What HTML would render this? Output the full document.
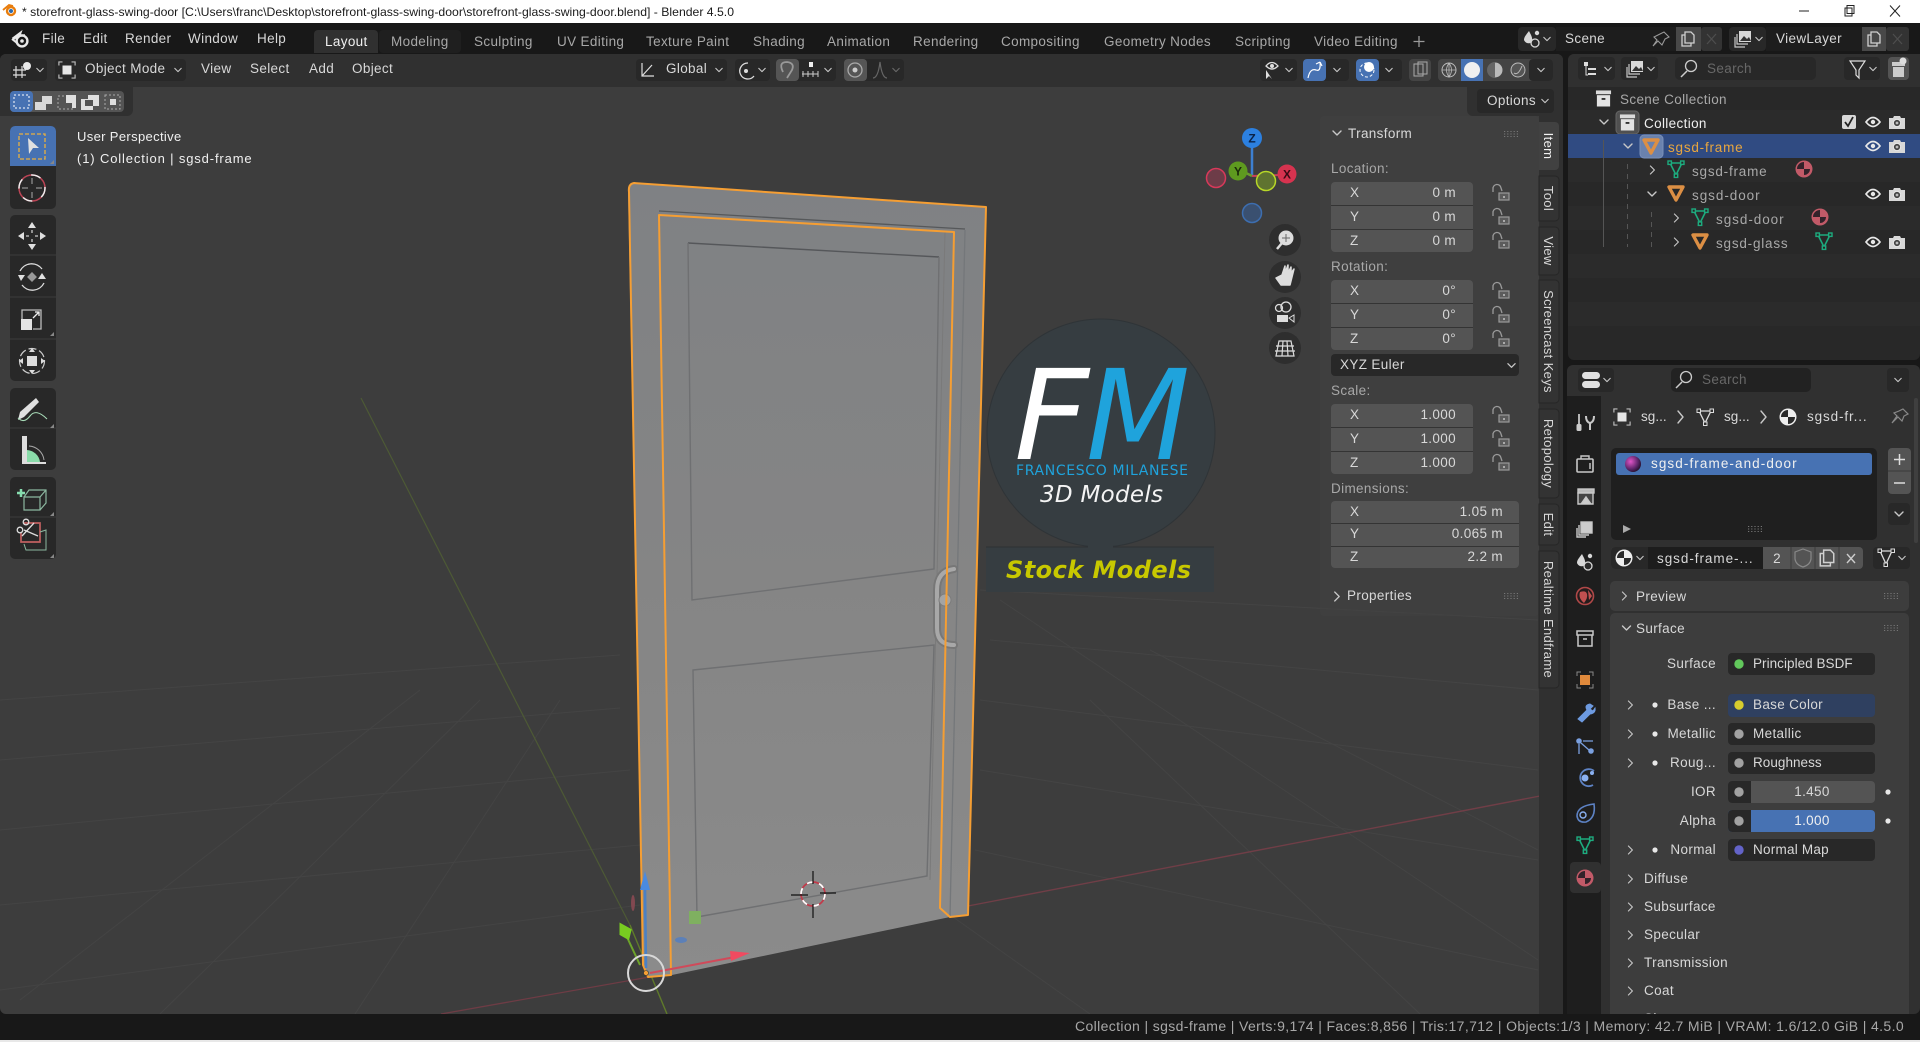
<!DOCTYPE html>
<html><head><meta charset="utf-8"><title>Blender</title>
<style>
html,body{margin:0;padding:0;background:#303030;width:1920px;height:1042px;overflow:hidden}
svg{display:block;position:absolute;left:0;top:0}
text{font-family:"Liberation Sans",sans-serif;font-size:13.5px;fill:#c8c8c8;letter-spacing:.35px;white-space:pre}
.m{fill:#d8d8d8}.t{fill:#a8a8a8}.w{fill:#f0f0f0}.r{text-anchor:end}.c{text-anchor:middle}
.ic{fill:none;stroke:#d4d4d4;stroke-width:1.5;stroke-linecap:round;stroke-linejoin:round}
.chev{fill:none;stroke:#c8c8c8;stroke-width:1.4;stroke-linecap:round;stroke-linejoin:round}
.logo{font-family:"DejaVu Sans",sans-serif;letter-spacing:0}
</style></head><body>
<svg width="1920" height="1042" viewBox="0 0 1920 1042" xmlns="http://www.w3.org/2000/svg">
<defs>
<symbol id="dn" viewBox="0 0 10 10" overflow="visible"><path d="M1 3 L5 7 L9 3" class="chev"/></symbol>
<symbol id="rt" viewBox="0 0 10 10" overflow="visible"><path d="M3 0 L8 5 L3 10" class="chev"/></symbol>
<symbol id="lock" viewBox="0 0 18 16" overflow="visible"><path d="M1 7 V4 a4 4 0 0 1 8 -1 l1 3" fill="none" stroke="#9a9a9a" stroke-width="1.3"/><rect x="7" y="8" width="10" height="7" fill="#5c5c5c" stroke="#9a9a9a" stroke-width="1.2"/><rect x="11" y="11" width="2" height="2" fill="#aaa"/></symbol>
<symbol id="tri" viewBox="0 0 18 18" overflow="visible"><path d="M2 3 H16 L9 16 Z" fill="none" stroke="#dc8f44" stroke-width="3.4" stroke-linejoin="round"/></symbol>
<symbol id="mesh" viewBox="0 0 18 18" overflow="visible"><path d="M3 3 H15 L9 15 Z" fill="none" stroke="#1dab7e" stroke-width="1.6"/><g fill="#282828" stroke="#1dab7e" stroke-width="1.4"><rect x="1" y="1" width="3.4" height="3.4"/><rect x="13.6" y="1" width="3.4" height="3.4"/><rect x="7.3" y="14" width="3.4" height="3.4"/></g></symbol>
<symbol id="matl" viewBox="0 0 18 18" overflow="visible"><circle cx="9" cy="9" r="8.5" fill="#c25a68"/><path d="M9 9 H2 A7 7 0 0 1 9 2 Z M9 9 H15 A6 6 0 0 1 9 15 Z" fill="#33222a"/></symbol>
<symbol id="mat" viewBox="0 0 18 18" overflow="visible"><circle cx="9" cy="9" r="8.5" fill="#eee"/><path d="M9 9 H16 A7 7 0 0 1 9 16 Z M9 9 H2 A7 7 0 0 1 9 2 Z" fill="#2a2a2a"/></symbol>
<symbol id="eye" viewBox="0 0 16 12" overflow="visible"><path d="M1 6 Q8 -3 15 6 Q8 15 1 6 Z" fill="none" stroke="#e8e8e8" stroke-width="1.7"/><circle cx="8" cy="6" r="2.2" fill="#e8e8e8"/></symbol>
<symbol id="cam" viewBox="0 0 16 14" overflow="visible"><path d="M0 3 H4 L5 1 H11 L12 3 H16 V14 H0 Z" fill="#d8d8d8"/><circle cx="8" cy="8" r="3.6" fill="#444" stroke="#e8e8e8"/><circle cx="8" cy="8" r="1.4" fill="#bbb"/></symbol>
<symbol id="coll" viewBox="0 0 18 18" overflow="visible"><rect x="1" y="1" width="16" height="4" fill="#dadada"/><rect x="2" y="6" width="14" height="12" fill="#e2e2e2"/><rect x="7" y="9" width="4" height="2" fill="#333"/></symbol>
<symbol id="grip" viewBox="0 0 14 6" overflow="visible"><path d="M0 .5 h14 M0 3 h14 M0 5.5 h14" stroke="#777" stroke-width="1" stroke-dasharray="1.2 2"/></symbol>
<symbol id="copy" viewBox="0 0 14 16" overflow="visible"><path d="M4 1 H10 L13 4 V12 H4 Z" fill="none" stroke="#d0d0d0" stroke-width="1.3"/><path d="M4 4 H1 V15 H10 V12" fill="none" stroke="#d0d0d0" stroke-width="1.3"/></symbol>
<symbol id="scene" viewBox="0 0 18 18" overflow="visible"><path d="M6 1 C3 5 1 7 1 10 A5 5 0 0 0 9 12 C10 8 8 5 6 1 Z" fill="#d8d8d8"/><circle cx="12" cy="13" r="4" fill="#2a2a2a" stroke="#d8d8d8" stroke-width="1.3"/><circle cx="14" cy="3" r="2.2" fill="#d8d8d8"/></symbol>
<symbol id="vl" viewBox="0 0 18 18" overflow="visible"><rect x="5" y="1" width="12" height="11" fill="#d8d8d8"/><path d="M6 11 L10 6 L13 9 L15 7 L17 11 Z" fill="#333"/><path d="M3 4 V14 H14 M1 7 V17 H11" fill="none" stroke="#c8c8c8" stroke-width="1.2"/></symbol>
<symbol id="objicon" viewBox="0 0 20 20" overflow="visible"><path d="M1 5 V1 H5 M15 1 H19 V5 M19 15 V19 H15 M5 19 H1 V15" fill="none" stroke="#bbb" stroke-width="1.3"/><rect x="5" y="5" width="10" height="10" fill="#e6e6e6"/></symbol>
<linearGradient id="doorG" x1="0" y1="0" x2="0" y2="1"><stop offset="0" stop-color="#7f8184"/><stop offset=".5" stop-color="#858585"/><stop offset="1" stop-color="#8b8b8b"/></linearGradient>
<radialGradient id="sph" cx=".35" cy=".35" r=".8"><stop offset="0" stop-color="#e055c8"/><stop offset=".6" stop-color="#5a2468"/><stop offset="1" stop-color="#0c0810"/></radialGradient>
<clipPath id="vp"><rect x="0" y="87" width="1563" height="927"/></clipPath>
<clipPath id="props"><rect x="1601" y="396" width="319" height="618"/></clipPath>
</defs>

<!-- window background -->
<rect width="1920" height="1042" fill="#181818"/>
<!-- title bar -->
<rect width="1920" height="23" fill="#ffffff"/>
<circle cx="11" cy="11" r="4" fill="#fff" stroke="#e87d0d" stroke-width="2.4"/><circle cx="11" cy="11" r="2" fill="#2a6ab0"/><path d="M3 10 L9 5 L13 6" stroke="#e87d0d" stroke-width="1.8" fill="none"/>
<text x="22" y="16" style="font-size:12px;fill:#1a1a1a;letter-spacing:0" textLength="712" lengthAdjust="spacingAndGlyphs">* storefront-glass-swing-door [C:\Users\franc\Desktop\storefront-glass-swing-door\storefront-glass-swing-door.blend] - Blender 4.5.0</text>
<path d="M1799 11 H1809" stroke="#222" stroke-width="1"/>
<rect x="1845" y="8" width="7" height="8" fill="#fff" stroke="#222"/><rect x="1847" y="5.5" width="7" height="8" fill="none" stroke="#222"/>
<path d="M1890 5.5 L1900 16.5 M1900 5.5 L1890 16.5" stroke="#222" stroke-width="1"/>

<!-- top bar -->
<rect y="23" width="1920" height="31" fill="#181818"/>
<g transform="translate(11,31)"><path d="M2 7 L10 1 L9 4 L3 8 Z M6 4 H14" stroke="#e8e8e8" stroke-width="1.6" fill="#e8e8e8"/><circle cx="11" cy="10" r="5.4" fill="none" stroke="#e8e8e8" stroke-width="2.4"/><circle cx="11" cy="10" r="1.8" fill="#e8e8e8"/><path d="M1 8 L6 12" stroke="#e8e8e8" stroke-width="2"/></g>
<text x="42" y="43" class="m">File</text><text x="83" y="43" class="m">Edit</text><text x="125" y="43" class="m">Render</text><text x="188" y="43" class="m">Window</text><text x="257" y="43" class="m">Help</text>
<path d="M314 53 V34 a4 4 0 0 1 4 -4 H374 a4 4 0 0 1 4 4 V53 Z" fill="#303030"/>
<rect x="379" y="30" width="82" height="23" rx="4" fill="#1f1f1f"/>
<text x="325" y="46" class="w">Layout</text>
<g class="t"><text x="391" y="46" class="t">Modeling</text><text x="474" y="46" class="t">Sculpting</text><text x="557" y="46" class="t">UV Editing</text><text x="646" y="46" class="t">Texture Paint</text><text x="753" y="46" class="t">Shading</text><text x="827" y="46" class="t">Animation</text><text x="913" y="46" class="t">Rendering</text><text x="1001" y="46" class="t">Compositing</text><text x="1104" y="46" class="t">Geometry Nodes</text><text x="1235" y="46" class="t">Scripting</text><text x="1314" y="46" class="t">Video Editing</text></g>
<path d="M1419 36 V47 M1413.500 41.500 H1424.500" stroke="#999" stroke-width="1.3"/>

<!-- scene / view layer -->
<rect x="1518" y="27" width="38" height="24" rx="4" fill="#282828"/><use href="#scene" x="1523" y="30" width="18" height="18"/><use href="#dn" x="1543" y="35" width="8" height="8"/>
<rect x="1556" y="27" width="120" height="24" fill="#1d1d1d"/><text x="1565" y="43" class="m">Scene</text>
<path d="M1664 32 l5 5 -4 2 -3 6 -4 -4 -5 5 4 -6 -3 -3 6 -3 Z" fill="none" stroke="#999" stroke-width="1.1"/>
<rect x="1676" y="27" width="25" height="24" fill="#484848"/><use href="#copy" x="1681" y="31" width="14" height="16"/>
<rect x="1701" y="27" width="21" height="24" rx="3" fill="#333"/><path d="M1707 34 l9 10 M1716 34 l-9 10" stroke="#4e4e4e" stroke-width="1.2"/>
<rect x="1729" y="27" width="37" height="24" rx="4" fill="#282828"/><use href="#vl" x="1734" y="30" width="18" height="18"/><use href="#dn" x="1755" y="35" width="8" height="8"/>
<rect x="1766" y="27" width="96" height="24" fill="#1d1d1d"/><text x="1776" y="43" class="m">ViewLayer</text>
<rect x="1862" y="27" width="24" height="24" fill="#484848"/><use href="#copy" x="1867" y="31" width="14" height="16"/>
<rect x="1886" y="27" width="23" height="24" rx="3" fill="#333"/><path d="M1893 34 l9 10 M1902 34 l-9 10" stroke="#4e4e4e" stroke-width="1.2"/>

<!-- VIEWPORT -->
<rect x="0" y="54" width="1563" height="960" rx="6" fill="#3d3d3d"/>
<g clip-path="url(#vp)">
<g stroke="#444" stroke-width="1" fill="none">
<path d="M0 700 L620 655 M0 760 L620 708 M0 830 L630 770 M0 905 L640 845 M0 990 L640 905"/>
<path d="M990 640 L1538 690 M980 700 L1538 770 M980 770 L1538 860 M975 850 L1538 970 M980 590 L1538 620"/>
<path d="M953 917 L1090 1014 M1000 600 L1538 960 M1150 650 L1538 850 M1090 700 L1420 1014"/>
<path d="M355 1014 L560 700 M160 1014 L480 700 M20 1000 L420 690"/>
</g>
<path d="M441 1014 L672 973" stroke="#6e3c45" stroke-width="1.3"/><path d="M968 906 L1540 796" stroke="#703e47" stroke-width="1.4"/>
<path d="M361 398 L630 925" stroke="#4d5a35" stroke-width="1.2"/><path d="M630 925 L667 1014" stroke="#5f7a2a" stroke-width="1.4"/>

<!-- door body -->
<path d="M628 190 Q628 183 634 183 L986 207 L968 915 L950 917 L672 975 L648 977 L643 965 Z" fill="url(#doorG)"/>
<path d="M965 230 L950 917" stroke="#74777a" stroke-width="1.3" fill="none"/>
<path d="M659 211 L965 229" stroke="#56585a" stroke-width="1.3" fill="none"/>
<path d="M688 243 L939 257" stroke="#55575a" stroke-width="1.4" fill="none"/>
<path d="M688 243 L692 600 L934 569 L939 257" stroke="#6f7072" stroke-width="1.4" fill="none"/>
<path d="M693 670 L934 645 L927 876 L697 917 Z" stroke="#6f7072" stroke-width="1.4" fill="none"/>
<path d="M945 232 L930 880" stroke="#7a7a7a" stroke-width="1" fill="none"/>
<!-- handle -->
<path d="M954 569 Q937 571 937 590 V628 Q937 645 954 645" stroke="#777" stroke-width="8" fill="none" stroke-linecap="round"/>
<path d="M954 569 Q937 571 937 590 V628 Q937 645 954 645" stroke="#a8a8a8" stroke-width="4" fill="none" stroke-linecap="round"/>
<circle cx="945" cy="600" r="6" fill="#a4a4a4" stroke="#7c7c7c"/>
<!-- outlines -->
<g fill="none" stroke="#f59e33" stroke-width="2" stroke-linejoin="round">
<path d="M634 183 L986 207 L968 915 L950 917 L940 908 L954 232 L659 215 L671 975 L648 977 L643 965 L629 192 Q628 184 634 183 Z"/>
</g>
<!-- move gizmo -->
<path d="M646 968 L645 885" stroke="#4a80c4" stroke-width="2.5"/><path d="M645 871 L640 890 H650 Z" fill="#4a8ae0"/>
<path d="M626 935 L640 965" stroke="#6da32a" stroke-width="2"/><path d="M621 925 L630 930 L628 938 L621 934 Z" fill="#78cc20" stroke="#78cc20" stroke-width="3"/>
<path d="M650 973 L735 957" stroke="#d04a5a" stroke-width="2"/><path d="M730 951 L750 953 L731 961 Z" fill="#f04a60"/>
<rect x="689" y="911" width="12" height="13" fill="#7fb060"/>
<ellipse cx="681" cy="940" rx="6" ry="3" fill="#5c80b8"/>
<ellipse cx="633" cy="903" rx="2" ry="8" fill="#824850"/>
<circle cx="646" cy="973" r="18" fill="none" stroke="#d8d8d8" stroke-width="2"/>
<circle cx="646" cy="973" r="2.500" fill="#f59e33" stroke="#333" stroke-width=".6"/>
<!-- 3D cursor -->
<g fill="none"><circle cx="813" cy="894" r="12" stroke="#c23a4a" stroke-width="1.700"/><circle cx="813" cy="894" r="12" stroke="#fff" stroke-width="1.700" stroke-dasharray="6 6.500"/>
<path d="M813 871 V884 M813 904 V918 M791 895 H808 M820 893 H836" stroke="#111" stroke-width="1.200"/></g>

<!-- logo -->
<circle cx="1101" cy="433" r="114" fill="#363d41" stroke="#2f3437"/>
<rect x="986" y="547" width="228" height="45" fill="#363d41"/>
<rect x="1088" y="535" width="25" height="14" fill="#363d41"/>
<path d="M986 547 H1088 M1113 547 H1214" stroke="#2d3134" stroke-width="1"/>
<text x="1014" y="459" class="logo" style="font-size:125px;font-style:italic;fill:#fff" textLength="75" lengthAdjust="spacingAndGlyphs">F</text>
<text x="1086" y="459" class="logo" style="font-size:125px;font-style:italic;fill:#1fa3dc" textLength="104" lengthAdjust="spacingAndGlyphs">M</text>
<text x="1016" y="475" class="logo" style="font-size:14px;fill:#1fa3dc" textLength="172">FRANCESCO MILANESE</text>
<text x="1040" y="502" class="logo" style="font-size:23px;font-style:italic;fill:#f4f4f4" textLength="123">3D Models</text>
<text x="1006" y="578" class="logo" style="font-size:24px;font-weight:bold;font-style:italic;fill:#c8c800" textLength="185">Stock Models</text>
</g>

<!-- viewport header -->
<path d="M0 87 V60 a6 6 0 0 1 6 -6 H1557 a6 6 0 0 1 6 6 V87 Z" fill="#303030"/>
<path d="M133 87 V110 a6 6 0 0 1 -6 6 H0 V87 Z" fill="#303030"/>
<path d="M1467 87 V110 a6 6 0 0 0 6 6 H1563 V87 Z" fill="#303030"/>
<rect x="11" y="59" width="36" height="22" rx="4" fill="#282828"/>
<path d="M16 66 V78 M22 66 V78 M13 70 H26 M13 75 H26" stroke="#ddd" stroke-width="1.200"/><circle cx="27" cy="66" r="4" fill="#e8e8e8"/><use href="#dn" x="36" y="66" width="8" height="8"/>
<rect x="55" y="59" width="131" height="22" rx="4" fill="#282828"/>
<use href="#objicon" x="58" y="60" width="18" height="20"/>
<text x="85" y="73" class="m">Object Mode</text><use href="#dn" x="174" y="66" width="8" height="8"/>
<text x="201" y="73" class="m">View</text><text x="250" y="73" class="m">Select</text><text x="309" y="73" class="m">Add</text><text x="352" y="73" class="m">Object</text>
<rect x="636" y="59" width="91" height="22" rx="4" fill="#282828"/>
<path d="M642 63 V76 H654 M642 76 L652 65" fill="none" stroke="#ddd" stroke-width="1.200"/><text x="666" y="73" class="m">Global</text><use href="#dn" x="715" y="66" width="8" height="8"/>
<rect x="735" y="59" width="35" height="22" rx="4" fill="#282828"/><path d="M748 63 A8 8 0 1 0 754 76" fill="none" stroke="#ddd" stroke-width="1.300"/><circle cx="746" cy="71" r="2" fill="#ddd"/><use href="#dn" x="758" y="66" width="8" height="8"/>
<rect x="776" y="59" width="60" height="22" rx="4" fill="#282828"/><rect x="776" y="59" width="23" height="22" rx="4" fill="#555"/>
<path d="M783 72 Q778 62 787 62 Q795 63 792 70 L787 78" fill="none" stroke="#999" stroke-width="1.800"/>
<path d="M802 74 H818 M803 71 V77 M808 71 V77 M813 71 V77 M818 71 V77" stroke="#ccc"/><rect x="809" y="62" width="4" height="5" fill="#eee"/><use href="#dn" x="824" y="66" width="8" height="8"/>
<rect x="844" y="59" width="60" height="22" rx="4" fill="#282828"/><rect x="844" y="59" width="23" height="22" rx="4" fill="#555"/>
<circle cx="855" cy="70" r="7" fill="none" stroke="#aaa" stroke-width="1.300"/><circle cx="855" cy="70" r="2.500" fill="#ccc"/>
<path d="M873 78 Q878 78 880 62 Q882 78 887 78" fill="none" stroke="#666" stroke-width="1.200"/><use href="#dn" x="892" y="66" width="8" height="8" opacity=".4"/>

<rect x="1260" y="59" width="37" height="22" rx="4" fill="#282828"/><path d="M1266 70 L1266 79 L1269 76 L1272 79 Z" fill="#ddd"/><path d="M1266 66 Q1272 59 1278 66 Q1272 72 1266 66 Z" fill="none" stroke="#ddd" stroke-width="1.300"/><circle cx="1272" cy="66" r="2" fill="#ddd"/><use href="#dn" x="1285" y="66" width="8" height="8"/>
<rect x="1303" y="59" width="46" height="22" rx="4" fill="#282828"/><rect x="1303" y="59" width="23" height="22" rx="4" fill="#4772b3"/>
<path d="M1308 78 Q1310 68 1316 70 Q1321 72 1320 62 M1320 62 L1316 64 M1320 62 L1322 66" fill="none" stroke="#fff" stroke-width="1.200"/><use href="#dn" x="1333" y="66" width="8" height="8"/>
<rect x="1356" y="59" width="46" height="22" rx="4" fill="#282828"/><rect x="1356" y="59" width="23" height="22" rx="4" fill="#4772b3"/>
<circle cx="1367" cy="70" r="7" fill="none" stroke="#fff" stroke-dasharray="3 2"/><circle cx="1369" cy="67" r="5" fill="#fff"/><use href="#dn" x="1385" y="66" width="8" height="8"/>
<rect x="1409" y="59" width="22" height="22" rx="4" fill="#444"/><rect x="1414" y="64" width="9" height="12" fill="none" stroke="#aaa"/><rect x="1418" y="62" width="9" height="12" fill="none" stroke="#aaa"/>
<rect x="1438" y="59" width="115" height="22" rx="4" fill="#444"/><rect x="1461" y="59" width="22" height="22" fill="#4772b3"/><rect x="1529" y="59" width="24" height="22" rx="4" fill="#282828"/>
<circle cx="1449" cy="70" r="7" fill="none" stroke="#bbb"/><path d="M1442 70 H1456 M1449 63 V77 M1449 63 Q1444 70 1449 77 Q1454 70 1449 63" fill="none" stroke="#bbb" stroke-width=".8"/>
<circle cx="1472" cy="70" r="8" fill="#f0f0f0"/>
<circle cx="1495" cy="70" r="7.500" fill="#bbb"/><path d="M1495 62 A8 8 0 0 0 1495 78 Z" fill="#666"/>
<circle cx="1518" cy="70" r="7" fill="#555" stroke="#bbb"/><path d="M1514 73 Q1518 76 1522 66" fill="none" stroke="#bbb"/>
<use href="#dn" x="1537" y="66" width="8" height="8"/>

<!-- select modes -->
<rect x="10" y="91" width="114" height="21" rx="4" fill="#545454"/>
<rect x="10" y="91" width="23" height="21" rx="4" fill="#4772b3"/><rect x="14" y="95" width="15" height="13" fill="none" stroke="#fff" stroke-dasharray="2 2"/>
<path d="M35 102 H42 V96 H52 V104 H46 V110 H35 Z" fill="#d8d8d8"/>
<rect x="58" y="96" width="15" height="13" fill="none" stroke="#aaa" stroke-dasharray="2 2"/><path d="M66 95 H76 V108 H72 V103 H66 Z" fill="#e0e0e0"/>
<path d="M81 99 H88 V95 H99 V106 H93 V110 H81 Z" fill="#e0e0e0"/><rect x="85" y="100" width="8" height="6" fill="#545454"/>
<rect x="105" y="95" width="15" height="14" fill="none" stroke="#aaa" stroke-dasharray="2 2"/><rect x="110" y="99" width="6" height="6" fill="#ddd"/>

<!-- Options -->
<rect x="1477" y="89" width="77" height="24" rx="4" fill="#282828"/><text x="1487" y="105" class="m">Options</text><use href="#dn" x="1541" y="97" width="8" height="8"/>

<!-- toolbar -->
<rect x="10" y="126" width="46" height="83" rx="5" fill="#282828"/>
<path d="M10 166 V131 a5 5 0 0 1 5 -5 H51 a5 5 0 0 1 5 5 V166 Z" fill="#4772b3"/>
<rect x="19" y="134" width="26" height="25" fill="none" stroke="#e8b040" stroke-width="1.300" stroke-dasharray="4 2"/><path d="M28 138 L39 148 H33 L29 154 Z" fill="#e0e0e0"/>
<circle cx="32" cy="188" r="13" fill="none" stroke="#bb4455" stroke-width="1.500"/><circle cx="32" cy="188" r="13" fill="none" stroke="#eee" stroke-width="1.500" stroke-dasharray="10 10"/><path d="M32 178 V184 M32 192 V198 M22 188 H28 M36 188 H42" stroke="#aaa"/>
<rect x="10" y="215" width="46" height="166" rx="5" fill="#282828"/>
<path d="M10 255 H56 M10 297 H56 M10 339 H56" stroke="#3d3d3d"/>
<g fill="#e0e0e0"><path d="M32 222 l-4 6 h8 Z M32 250 l-4 -6 h8 Z M18 236 l6 -4 v8 Z M46 236 l-6 -4 v8 Z"/></g><path d="M32 230 V233 M32 239 V242 M26 236 H29 M35 236 H38" stroke="#ccc" stroke-width="1.300"/>
<path d="M20 271 A13 13 0 0 1 42 269 M44 283 A13 13 0 0 1 22 285" fill="none" stroke="#ddd" stroke-width="1.300"/><path d="M21 281 l-3 -6 h7 Z M42 273 l-4 6 h8 Z" fill="#e0e0e0"/><rect x="28.500" y="273.500" width="7" height="7" fill="#999" transform="rotate(45 32 277)"/>
<rect x="21" y="319" width="11" height="11" fill="#e4e4e4"/><path d="M22 319 V310 H41 V329 H33" fill="none" stroke="#bbb" stroke-width="1.300"/><path d="M33 318 L39 312 M35 312 H39 V316" fill="none" stroke="#eee" stroke-width="1.300"/>
<circle cx="32" cy="361" r="12.500" fill="none" stroke="#ccc" stroke-width="1.200" stroke-dasharray="8 3"/><rect x="27" y="356" width="10" height="10" fill="#ddd"/><g fill="#ddd"><path d="M32 348 l-3 4 h6 Z M32 374 l-3 -4 h6 Z M19 361 l4 -3 v6 Z M45 361 l-4 -3 v6 Z"/></g>
<rect x="10" y="388" width="46" height="82" rx="5" fill="#282828"/><path d="M10 428 H56" stroke="#3d3d3d"/>
<path d="M20 412 L36 398 L39 402 L24 417 L18 420 Z" fill="#e0e0e0"/><path d="M18 418 Q24 424 30 416 T47 419" fill="none" stroke="#a8dcb8" stroke-width="1.100"/>
<path d="M22 436 H27 V462 H22 Z" fill="#ddd"/><path d="M27 462 V450 A14 14 0 0 1 40 462 Z" fill="#8adcaa"/><path d="M22 463 H46" stroke="#ddd" stroke-width="2"/><path d="M29 446 A16 16 0 0 1 44 460" fill="none" stroke="#aaa"/>
<rect x="10" y="477" width="46" height="82" rx="5" fill="#282828"/><path d="M10 517 H56" stroke="#3d3d3d"/>
<path d="M21 489 V497 M17 493 H25" stroke="#86dcae" stroke-width="2.500"/><path d="M24 497 H40 V510 H24 Z M24 497 L29 490 H46 V503 L40 510 M40 497 L46 490" fill="none" stroke="#8cb8a0" stroke-width="1.200"/>
<path d="M24 523 H40 V542 H21 V532" fill="none" stroke="#c06060" stroke-width="1.700"/><path d="M24 530 L38 536 M22 536 L34 523" stroke="#ddd" stroke-width="1.300"/><circle cx="20" cy="530" r="2.800" fill="none" stroke="#ddd" stroke-width="1.300"/><circle cx="26" cy="522" r="2.800" fill="none" stroke="#ddd" stroke-width="1.300"/><path d="M40 532 L46 530 V550 H26 L24 544" fill="none" stroke="#8cb8a0"/>
<g fill="#888"><path d="M54 160 v4 h-4 Z M54 332 v4 h-4 Z M54 424 v4 h-4 Z M54 512 v4 h-4 Z M54 554 v4 h-4 Z" /></g>

<text x="77" y="141" class="w" style="font-size:13px">User Perspective</text>
<text x="77" y="163" class="w" style="font-size:13px" textLength="175">(1) Collection | sgsd-frame</text>

<!-- nav gizmo -->
<path d="M1252 176 V146" stroke="#3d7fd0" stroke-width="2.500"/><path d="M1252 176 L1244 172" stroke="#6a9a30" stroke-width="2.500"/><path d="M1252 176 L1280 175" stroke="#c8405a" stroke-width="2"/>
<circle cx="1216" cy="178" r="9.500" fill="#6d3c48" stroke="#d8395a" stroke-width="1.500"/>
<circle cx="1252" cy="213" r="9.500" fill="#3a5070" stroke="#3d6eb0" stroke-width="1.500"/>
<circle cx="1238" cy="171" r="9.500" fill="#5e9a1f"/><text x="1238" y="175.500" class="c" style="font-size:12px;font-weight:bold;fill:#1a2a0a;letter-spacing:0">Y</text>
<circle cx="1266" cy="181" r="9.500" fill="#5f7330" stroke="#b8d828" stroke-width="1.500"/>
<circle cx="1287" cy="174" r="9.500" fill="#d6334f"/><text x="1287" y="178.500" class="c" style="font-size:12px;font-weight:bold;fill:#3a0a14;letter-spacing:0">X</text>
<circle cx="1252" cy="138" r="10" fill="#2c80e0"/><text x="1252" y="142.500" class="c" style="font-size:12px;font-weight:bold;fill:#0a2248;letter-spacing:0">Z</text>
<g fill="#2e2e2e"><circle cx="1285" cy="240" r="16"/><circle cx="1285" cy="277" r="16"/><circle cx="1285" cy="313" r="16"/><circle cx="1285" cy="348" r="16"/></g>
<g transform="translate(-2,1)"><circle cx="1288" cy="237" r="7.500" fill="#ddd"/><path d="M1279 248 L1284 242" stroke="#ddd" stroke-width="2.500"/><path d="M1288 233 V241 M1284 237 H1292" stroke="#666"/>
<path d="M1278 277 L1283 284 H1292 L1296 268 L1293 272 V266 L1290 272 V264 L1287 272 V265 L1284 274 Z" fill="#ddd" stroke="#ddd" stroke-width="1.500" stroke-linejoin="round"/>
<circle cx="1281" cy="307" r="3.500" fill="none" stroke="#ddd" stroke-width="1.300"/><circle cx="1288" cy="306" r="5" fill="none" stroke="#ddd" stroke-width="1.300"/><rect x="1279" y="314" width="11" height="7" fill="#ddd"/><path d="M1291 317 L1296 314 V321 Z" fill="none" stroke="#ddd"/></g>
<path d="M1279 341 H1291 L1294 356 H1276 Z M1276 346 H1294 M1275 351 H1295 M1283 341 L1282 356 M1287 341 L1288 356" fill="none" stroke="#ddd" stroke-width="1.200"/>

<!-- N panel -->
<rect x="1320" y="116" width="219" height="500" rx="4" fill="#414141" opacity=".55"/>
<use href="#dn" x="1331" y="128" width="12" height="10"/><text x="1348" y="138" class="m">Transform</text><use href="#grip" x="1504" y="131" width="14" height="6"/>
<text x="1331" y="173" class="t">Location:</text>
<text x="1331" y="271" class="t">Rotation:</text>
<text x="1331" y="395" class="t">Scale:</text>
<text x="1331" y="493" class="t">Dimensions:</text>
<g fill="#545454">
<rect x="1331" y="182" width="142" height="70" rx="4"/><rect x="1331" y="280" width="142" height="70" rx="4"/><rect x="1331" y="404" width="142" height="70" rx="4"/><rect x="1331" y="501" width="188" height="67" rx="4"/>
</g>
<path d="M1331 205.500 H1473 M1331 229.500 H1473 M1331 303.500 H1473 M1331 327.500 H1473 M1331 427.500 H1473 M1331 451.500 H1473 M1331 523.500 H1519 M1331 546.500 H1519" stroke="#343434"/>
<g style="fill:#d0d0d0">
<text x="1350" y="197" class="m">X</text><text x="1456" y="197" class="m r">0 m</text><text x="1350" y="221" class="m">Y</text><text x="1456" y="221" class="m r">0 m</text><text x="1350" y="245" class="m">Z</text><text x="1456" y="245" class="m r">0 m</text>
<text x="1350" y="295" class="m">X</text><text x="1456" y="295" class="m r">0°</text><text x="1350" y="319" class="m">Y</text><text x="1456" y="319" class="m r">0°</text><text x="1350" y="343" class="m">Z</text><text x="1456" y="343" class="m r">0°</text>
<text x="1350" y="419" class="m">X</text><text x="1456" y="419" class="m r">1.000</text><text x="1350" y="443" class="m">Y</text><text x="1456" y="443" class="m r">1.000</text><text x="1350" y="467" class="m">Z</text><text x="1456" y="467" class="m r">1.000</text>
<text x="1350" y="516" class="m">X</text><text x="1503" y="516" class="m r">1.05 m</text><text x="1350" y="538" class="m">Y</text><text x="1503" y="538" class="m r">0.065 m</text><text x="1350" y="561" class="m">Z</text><text x="1503" y="561" class="m r">2.2 m</text>
</g>
<use href="#lock" x="1492" y="185" width="18" height="16"/><use href="#lock" x="1492" y="209" width="18" height="16"/><use href="#lock" x="1492" y="233" width="18" height="16"/>
<use href="#lock" x="1492" y="283" width="18" height="16"/><use href="#lock" x="1492" y="307" width="18" height="16"/><use href="#lock" x="1492" y="331" width="18" height="16"/>
<use href="#lock" x="1492" y="407" width="18" height="16"/><use href="#lock" x="1492" y="431" width="18" height="16"/><use href="#lock" x="1492" y="455" width="18" height="16"/>
<rect x="1331" y="354" width="188" height="22" rx="4" fill="#282828"/><text x="1340" y="369" class="m">XYZ Euler</text><use href="#dn" x="1507" y="361" width="9" height="9"/>
<use href="#rt" x="1332" y="591" width="9" height="11"/><text x="1347" y="600" class="m">Properties</text><use href="#grip" x="1504" y="593" width="14" height="6"/>

<!-- N tabs -->
<rect x="1539" y="116" width="24" height="898" fill="#303030"/>
<g fill="#333" stroke="#262626">
<path d="M1539 227 H1555 a4 4 0 0 1 4 4 V271 a4 4 0 0 1 -4 4 H1539 Z"/><path d="M1539 176 H1555 a4 4 0 0 1 4 4 V217 a4 4 0 0 1 -4 4 H1539 Z"/><path d="M1539 280 H1555 a4 4 0 0 1 4 4 V399 a4 4 0 0 1 -4 4 H1539 Z"/><path d="M1539 409 H1555 a4 4 0 0 1 4 4 V494 a4 4 0 0 1 -4 4 H1539 Z"/><path d="M1539 504 H1555 a4 4 0 0 1 4 4 V541 a4 4 0 0 1 -4 4 H1539 Z"/><path d="M1539 551 H1555 a4 4 0 0 1 4 4 V684 a4 4 0 0 1 -4 4 H1539 Z"/>
</g>
<path d="M1539 122 H1555 a4 4 0 0 1 4 4 V166 a4 4 0 0 1 -4 4 H1539 Z" fill="#414141"/>
<g style="font-size:13px">
<text transform="translate(1544,146) rotate(90)" class="w c" style="font-size:13px">Item</text>
<text transform="translate(1544,198.500) rotate(90)" class="m c" style="font-size:13px">Tool</text>
<text transform="translate(1544,251) rotate(90)" class="m c" style="font-size:13px">View</text>
<text transform="translate(1544,341.500) rotate(90)" class="m c" style="font-size:13px">Screencast Keys</text>
<text transform="translate(1544,453.500) rotate(90)" class="m c" style="font-size:13px">Retopology</text>
<text transform="translate(1544,524.500) rotate(90)" class="m c" style="font-size:13px">Edit</text>
<text transform="translate(1544,619.500) rotate(90)" class="m c" style="font-size:13px">Realtime Endframe</text>
</g>

<!-- OUTLINER -->
<rect x="1568" y="54" width="352" height="306" rx="6" fill="#282828"/>
<path d="M1568 87 V60 a6 6 0 0 1 6 -6 H1920 V87 Z" fill="#303030"/>
<g fill="#2b2b2b"><rect x="1568" y="110" width="352" height="24"/><rect x="1568" y="158" width="352" height="24"/><rect x="1568" y="206" width="352" height="24"/><rect x="1568" y="254" width="352" height="24"/><rect x="1568" y="302" width="352" height="24"/></g>
<rect x="1578" y="57" width="37" height="23" rx="4" fill="#282828"/><path d="M1584 62 h4 v4 h-4 Z M1588 68 h8 v2 h-8 Z M1588 73 h8 v2 h-8 Z M1588 78 h0" fill="#ddd"/><path d="M1586 66 V75 H1588" fill="none" stroke="#ddd"/><use href="#dn" x="1604" y="65" width="8" height="8"/>
<rect x="1621" y="57" width="37" height="23" rx="4" fill="#282828"/><use href="#vl" x="1626" y="60" width="18" height="18"/><use href="#dn" x="1647" y="65" width="8" height="8"/>
<rect x="1675" y="57" width="141" height="23" rx="5" fill="#282828"/><circle cx="1691" cy="66" r="5.500" fill="none" stroke="#ccc" stroke-width="1.300"/><path d="M1687 71 L1681 77" stroke="#ccc" stroke-width="1.500"/><text x="1707" y="73" style="fill:#686868">Search</text>
<rect x="1844" y="57" width="36" height="23" rx="4" fill="#282828"/><path d="M1850 61 H1865 L1859 70 V78 L1856 75 V70 Z" fill="none" stroke="#ddd" stroke-width="1.200"/><use href="#dn" x="1869" y="65" width="8" height="8"/>
<rect x="1888" y="57" width="21" height="23" rx="4" fill="#545454"/><rect x="1892" y="62" width="13" height="4" fill="#ccc"/><rect x="1893" y="67" width="11" height="10" fill="#ccc"/><circle cx="1903" cy="61" r="3.500" fill="#ddd"/>

<use href="#coll" x="1595" y="89" width="17" height="18" /><text x="1620" y="104" class="t">Scene Collection</text>
<use href="#dn" x="1598" y="117" width="12" height="10"/><rect x="1616" y="111" width="23" height="23" rx="4" fill="#505050" stroke="#666"/><use href="#coll" x="1619" y="113" width="17" height="18"/><text x="1644" y="128" class="w">Collection</text>
<rect x="1842" y="115" width="14" height="14" rx="2" fill="#d8d8d8"/><path d="M1845 122 L1848 126 L1853 117" fill="none" stroke="#222" stroke-width="1.800"/>
<use href="#eye" x="1865" y="116" width="16" height="12"/><use href="#cam" x="1889" y="115" width="16" height="14"/>
<rect x="1568" y="134" width="352" height="24" fill="#304b82"/>
<use href="#dn" x="1622" y="141" width="12" height="10"/><rect x="1640" y="135" width="23" height="23" rx="4" fill="#6a82ae" stroke="#7a90b8"/><use href="#tri" x="1642" y="137" width="18" height="18"/>
<text x="1668" y="152" style="fill:#e9a63e" textLength="75">sgsd-frame</text><use href="#eye" x="1865" y="140" width="16" height="12"/><use href="#cam" x="1889" y="139" width="16" height="14"/>
<path d="M1603.500 140 V247" stroke="#555"/><path d="M1627.500 164 V247" stroke="#555" stroke-dasharray="5 5"/><path d="M1651.500 212 V247" stroke="#555" stroke-dasharray="5 5"/>
<use href="#rt" x="1648" y="164" width="8" height="12"/><use href="#mesh" x="1667" y="160" width="18" height="18"/><text x="1692" y="176" class="t" textLength="75">sgsd-frame</text><use href="#matl" x="1795" y="160" width="18" height="18"/>
<use href="#dn" x="1646" y="189" width="12" height="10"/><use href="#tri" x="1667" y="184" width="18" height="18"/><text x="1692" y="200" class="t" textLength="68">sgsd-door</text><use href="#eye" x="1865" y="188" width="16" height="12"/><use href="#cam" x="1889" y="187" width="16" height="14"/>
<use href="#rt" x="1672" y="212" width="8" height="12"/><use href="#mesh" x="1691" y="208" width="18" height="18"/><text x="1716" y="224" class="t" textLength="68">sgsd-door</text><use href="#matl" x="1811" y="208" width="18" height="18"/>
<use href="#rt" x="1672" y="236" width="8" height="12"/><use href="#tri" x="1691" y="232" width="18" height="18"/><text x="1716" y="248" class="t" textLength="72">sgsd-glass</text><use href="#mesh" x="1815" y="232" width="18" height="18"/><use href="#eye" x="1865" y="236" width="16" height="12"/><use href="#cam" x="1889" y="235" width="16" height="14"/>

<!-- PROPERTIES -->
<rect x="1567" y="365" width="353" height="649" rx="6" fill="#303030"/>
<rect x="1578" y="368" width="36" height="24" rx="4" fill="#282828"/><rect x="1582" y="372" width="18" height="7" rx="3.500" fill="#e0e0e0"/><rect x="1582" y="381" width="18" height="7" rx="3.500" fill="#e0e0e0"/><use href="#dn" x="1603" y="376" width="8" height="8"/>
<rect x="1671" y="368" width="140" height="24" rx="5" fill="#222"/><circle cx="1686" cy="377" r="5.500" fill="none" stroke="#ccc" stroke-width="1.300"/><path d="M1682 382 L1676 388" stroke="#ccc" stroke-width="1.500"/><text x="1702" y="384" style="fill:#686868">Search</text>
<rect x="1887" y="368" width="22" height="24" rx="4" fill="#282828"/><use href="#dn" x="1894" y="376" width="8" height="8"/>
<rect x="1567" y="396" width="34" height="618" fill="#1e1e1e"/>
<!-- prop tabs -->
<g fill="none" stroke="#c8c8c8" stroke-width="1.400">
<path d="M1579 414 V424" stroke-width="1.800"/><rect x="1576.500" y="424" width="5" height="7" rx="1.500" fill="#ccc" stroke="none"/><path d="M1586 416 Q1586 422 1590 423 V430 M1590 423 Q1594 422 1594 416" stroke-width="2"/>
<rect x="1577" y="459" width="16" height="13" rx="1" stroke-width="1.600"/><path d="M1581 459 V456 H1589 V459 M1590 463 V469" />
<rect x="1578" y="489" width="16" height="4" fill="#bbb"/><path d="M1578 493 H1593 V504 H1578 Z" fill="#444"/><path d="M1581 504 L1586 497 L1591 504" fill="#ccc"/>
<rect x="1581" y="522" width="11" height="11" fill="#ccc"/><path d="M1579 525 V535 H1589 M1577 528 V537 H1586"/>
</g>
<use href="#scene" x="1576" y="553" width="18" height="18"/>
<circle cx="1585" cy="596" r="8.500" fill="#241c1c" stroke="#b04848" stroke-width="1.600"/><path d="M1580 592 Q1586 590 1587 594 T1584 603 Q1578 598 1580 592 Z M1588 590 L1592 596 L1589 600 Z" fill="#c05050"/>
<path d="M1577 631 H1593 V635 H1577 Z M1578 635 V646 H1592 V635 M1583 639 H1587" fill="none" stroke="#c8c8c8" stroke-width="1.500"/>
<path d="M1577 676 V672 H1581 M1589 672 H1593 V676 M1593 684 V688 H1589 M1581 688 H1577 V684" fill="none" stroke="#888"/><rect x="1580" y="675" width="10" height="10" fill="#e08a3c"/>
<path d="M1578 719 L1587 710 Q1584 705 1590 704 L1593 706 L1590 709 L1593 711 L1595 708 Q1596 713 1590 714 L1582 722 Z" fill="#6d9ae0" stroke="#6d9ae0"/>
<circle cx="1579" cy="741" r="2.800" fill="#7aa0e0"/><circle cx="1591" cy="751" r="2.800" fill="#7aa0e0"/><path d="M1579 744 V754 M1581 743 L1589 750 M1583 741 H1593" stroke="#7aa0e0" stroke-width="1.300" fill="none"/>
<path d="M1594 771 A8.500 8.500 0 1 0 1593 785" fill="none" stroke="#5d82c4" stroke-width="1.800"/><circle cx="1585" cy="778" r="3.500" fill="#8ab0f0"/><circle cx="1592" cy="773" r="2" fill="#8ab0f0"/>
<path d="M1577 816 Q1577 806 1594 804 Q1596 818 1586 822 Q1578 823 1577 816 Z" fill="none" stroke="#5d82c4" stroke-width="1.600"/><circle cx="1583" cy="815" r="3" fill="none" stroke="#8ab0f0" stroke-width="1.400"/>
<use href="#mesh" x="1576" y="836" width="18" height="18"/>
<rect x="1570" y="862" width="31" height="31" rx="4" fill="#303030"/>
<use href="#matl" x="1576" y="869" width="18" height="18"/>

<!-- breadcrumb -->
<use href="#objicon" x="1613" y="408" width="18" height="18"/><text x="1641" y="421" class="m" textLength="26">sg...</text><path d="M1678 411 L1683 417 L1678 423" class="chev" stroke-width="1.600"/>
<path d="M1699 411 H1711 L1705 423 Z" fill="none" stroke="#ddd" stroke-width="1.300"/><g fill="#303030" stroke="#ddd"><rect x="1697" y="409" width="3.500" height="3.500"/><rect x="1710" y="409" width="3.500" height="3.500"/><rect x="1703.500" y="422" width="3.500" height="3.500"/></g>
<text x="1724" y="421" class="m" textLength="26">sg...</text><path d="M1761 411 L1766 417 L1761 423" class="chev" stroke-width="1.600"/>
<use href="#mat" x="1779" y="408" width="18" height="18"/><text x="1807" y="421" class="m" textLength="60">sgsd-fr...</text>
<path d="M1903 409 l5 5 -4 2 -2 5 -4 -4 -6 6 5 -7 -3 -3 5 -2 Z" fill="none" stroke="#888" stroke-width="1.200"/>
<!-- list -->
<rect x="1611" y="448" width="266" height="92" rx="5" fill="#1f1f1f"/>
<rect x="1616" y="453" width="256" height="22" rx="3" fill="#4772b3"/>
<circle cx="1633" cy="464" r="8" fill="url(#sph)"/><text x="1651" y="468" class="w" textLength="146">sgsd-frame-and-door</text>
<path d="M1623 525 L1631 529 L1623 533 Z" fill="#aaa"/><use href="#grip" x="1748" y="526" width="14" height="6"/>
<rect x="1888" y="448" width="23" height="46" rx="4" fill="#545454"/><path d="M1888 471 H1911" stroke="#3a3a3a"/>
<path d="M1899.500 454 V465 M1894 459.500 H1905 M1894 483 H1905" stroke="#ddd" stroke-width="1.500"/>
<rect x="1888" y="503" width="22" height="22" rx="4" fill="#282828"/><use href="#dn" x="1894" y="509" width="10" height="10"/>
<!-- material selector -->
<rect x="1611" y="547" width="252" height="22" rx="4" fill="#545454"/>
<path d="M1615 547 H1648 V569 H1615 a4 4 0 0 1 -4 -4 V551 a4 4 0 0 1 4 -4 Z" fill="#282828"/><use href="#mat" x="1615" y="549" width="18" height="18"/><use href="#dn" x="1636" y="554" width="8" height="8"/>
<rect x="1648" y="547" width="115" height="22" fill="#1d1d1d"/><text x="1657" y="563" class="m" textLength="96">sgsd-frame-...</text>
<text x="1777" y="563" class="m c">2</text><path d="M1791 547 V569 M1815 547 V569 M1839 547 V569" stroke="#3c3c3c"/>
<path d="M1795 552 L1803 549 L1811 552 V559 Q1810 565 1803 567 Q1796 565 1795 559 Z" fill="none" stroke="#888" stroke-width="1.200"/>
<use href="#copy" x="1819" y="549" width="16" height="18"/>
<path d="M1847 554 L1855 563 M1855 554 L1847 563" stroke="#ccc" stroke-width="1.400"/>
<rect x="1873" y="547" width="37" height="22" rx="4" fill="#282828"/>
<path d="M1880 551 H1892 L1886 564 Z" fill="none" stroke="#ddd" stroke-width="1.300"/><g fill="#282828" stroke="#ddd"><rect x="1878" y="549" width="3.500" height="3.500"/><rect x="1891" y="549" width="3.500" height="3.500"/><rect x="1884" y="563" width="3.500" height="3.500"/></g><use href="#dn" x="1898" y="554" width="8" height="8"/>

<!-- panels -->
<rect x="1610" y="581" width="299" height="30" rx="5" fill="#3d3d3d"/><use href="#rt" x="1620" y="590" width="8" height="12"/><text x="1636" y="601" class="m">Preview</text><use href="#grip" x="1884" y="593" width="14" height="6"/>
<path d="M1610 1014 V618 a5 5 0 0 1 5 -5 H1904 a5 5 0 0 1 5 5 V1014 Z" fill="#3d3d3d"/><use href="#dn" x="1621" y="623" width="11" height="10"/><text x="1636" y="633" class="m">Surface</text><use href="#grip" x="1884" y="625" width="14" height="6"/>
<rect x="1914" y="398" width="4" height="145" rx="2" fill="#3f3f3f"/>
<g clip-path="url(#props)">
<text x="1716" y="668" class="m r">Surface</text><rect x="1728" y="653" width="147" height="22" rx="4" fill="#282828"/><circle cx="1739" cy="664" r="4.700" fill="#62c85c"/><text x="1753" y="668" class="m" textLength="100">Principled BSDF</text>
<text x="1716" y="709" class="m r">Base ...</text><rect x="1728" y="694" width="147" height="23" rx="4" fill="#2f4060"/><circle cx="1739" cy="705" r="4.700" fill="#d6cc2e"/><text x="1753" y="709" class="m" textLength="70">Base Color</text>
<text x="1716" y="738" class="m r">Metallic</text><rect x="1728" y="723" width="147" height="22" rx="4" fill="#282828"/><circle cx="1739" cy="734" r="4.700" fill="#a2a2a2"/><text x="1753" y="738" class="m">Metallic</text>
<text x="1716" y="767" class="m r">Roug...</text><rect x="1728" y="752" width="147" height="22" rx="4" fill="#282828"/><circle cx="1739" cy="763" r="4.700" fill="#a2a2a2"/><text x="1753" y="767" class="m" textLength="69">Roughness</text>
<text x="1716" y="796" class="m r">IOR</text><rect x="1728" y="781" width="147" height="22" rx="4" fill="#545454"/><path d="M1732 781 H1751 V803 H1732 a4 4 0 0 1 -4 -4 V785 a4 4 0 0 1 4 -4 Z" fill="#282828"/><circle cx="1739" cy="792" r="4.700" fill="#a2a2a2"/><text x="1812" y="796" class="m c">1.450</text>
<text x="1716" y="825" class="m r">Alpha</text><rect x="1728" y="810" width="147" height="22" rx="4" fill="#4772b3"/><path d="M1732 810 H1751 V832 H1732 a4 4 0 0 1 -4 -4 V814 a4 4 0 0 1 4 -4 Z" fill="#282828"/><circle cx="1739" cy="821" r="4.700" fill="#a2a2a2"/><text x="1812" y="825" class="w c">1.000</text>
<text x="1716" y="854" class="m r">Normal</text><rect x="1728" y="839" width="147" height="22" rx="4" fill="#282828"/><circle cx="1739" cy="850" r="4.700" fill="#6363c8"/><text x="1753" y="854" class="m" textLength="76">Normal Map</text>
<g fill="#e8e8e8"><circle cx="1655" cy="705" r="2.600"/><circle cx="1655" cy="734" r="2.600"/><circle cx="1655" cy="763" r="2.600"/><circle cx="1655" cy="850" r="2.600"/><circle cx="1888" cy="792" r="2.600"/><circle cx="1888" cy="821" r="2.600"/></g>
<use href="#rt" x="1626" y="699" width="8" height="12"/><use href="#rt" x="1626" y="728" width="8" height="12"/><use href="#rt" x="1626" y="757" width="8" height="12"/><use href="#rt" x="1626" y="844" width="8" height="12"/>
<use href="#rt" x="1626" y="873" width="8" height="12"/><text x="1644" y="883" class="m">Diffuse</text>
<use href="#rt" x="1626" y="901" width="8" height="12"/><text x="1644" y="911" class="m">Subsurface</text>
<use href="#rt" x="1626" y="929" width="8" height="12"/><text x="1644" y="939" class="m">Specular</text>
<use href="#rt" x="1626" y="957" width="8" height="12"/><text x="1644" y="967" class="m">Transmission</text>
<use href="#rt" x="1626" y="985" width="8" height="12"/><text x="1644" y="995" class="m">Coat</text>
<use href="#rt" x="1626" y="1013" width="8" height="12"/><text x="1644" y="1023" class="m">Sheen</text>
</g>

<!-- status bar -->
<rect y="1014" width="1920" height="26" fill="#181818"/>
<text x="1075" y="1031" class="t" textLength="829" lengthAdjust="spacingAndGlyphs">Collection | sgsd-frame | Verts:9,174 | Faces:8,856 | Tris:17,712 | Objects:1/3 | Memory: 42.7 MiB | VRAM: 1.6/12.0 GiB | 4.5.0</text>
<rect y="1040" width="1920" height="2" fill="#e8e8e8"/>
</svg>
</body></html>
